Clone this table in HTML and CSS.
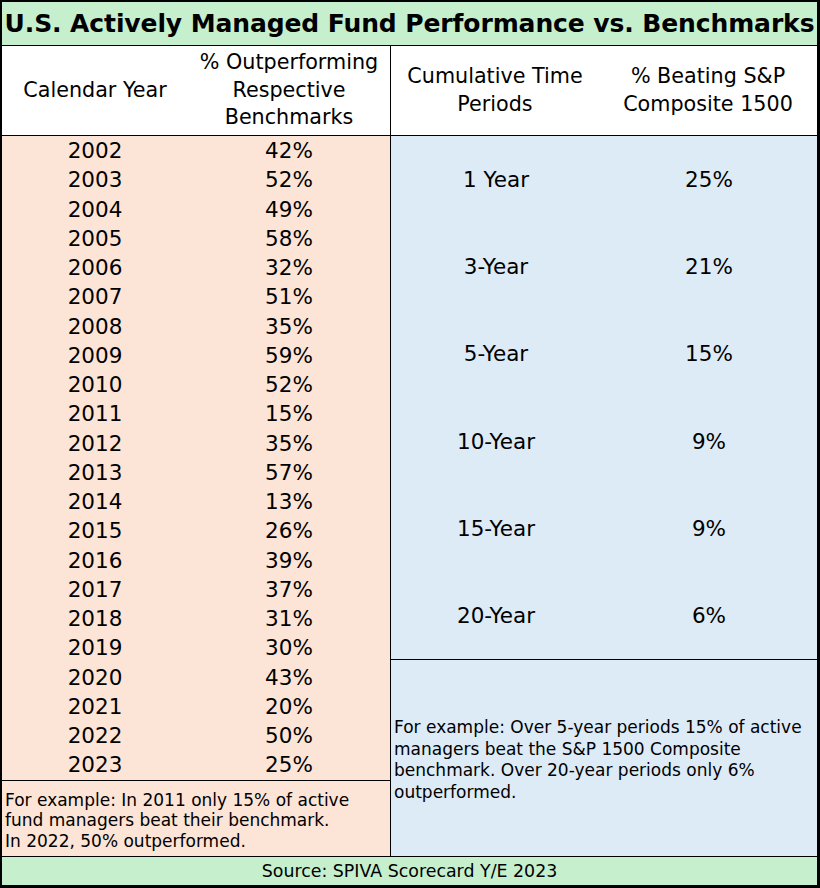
FILE: index.html
```html
<!DOCTYPE html>
<html lang="en">
<head>
<meta charset="utf-8">
<title>U.S. Actively Managed Fund Performance vs. Benchmarks</title>
<link rel="stylesheet" href="styles.css">
</head>
<body>
<div class="sheet">
  <div class="title">U.S. Actively Managed Fund Performance vs. Benchmarks</div>
  <div class="main">
    <div class="head head-left">
      <div class="hcell">Calendar Year</div>
      <div class="hcell">% Outperforming<br>Respective<br>Benchmarks</div>
    </div>
    <div class="head head-right">
      <div class="hcell">Cumulative Time<br>Periods</div>
      <div class="hcell">% Beating S&amp;P<br>Composite 1500</div>
    </div>
    <div class="left-body">
      <div class="years">
        <div class="yrow"><span>2002</span><span>42%</span></div>
        <div class="yrow"><span>2003</span><span>52%</span></div>
        <div class="yrow"><span>2004</span><span>49%</span></div>
        <div class="yrow"><span>2005</span><span>58%</span></div>
        <div class="yrow"><span>2006</span><span>32%</span></div>
        <div class="yrow"><span>2007</span><span>51%</span></div>
        <div class="yrow"><span>2008</span><span>35%</span></div>
        <div class="yrow"><span>2009</span><span>59%</span></div>
        <div class="yrow"><span>2010</span><span>52%</span></div>
        <div class="yrow"><span>2011</span><span>15%</span></div>
        <div class="yrow"><span>2012</span><span>35%</span></div>
        <div class="yrow"><span>2013</span><span>57%</span></div>
        <div class="yrow"><span>2014</span><span>13%</span></div>
        <div class="yrow"><span>2015</span><span>26%</span></div>
        <div class="yrow"><span>2016</span><span>39%</span></div>
        <div class="yrow"><span>2017</span><span>37%</span></div>
        <div class="yrow"><span>2018</span><span>31%</span></div>
        <div class="yrow"><span>2019</span><span>30%</span></div>
        <div class="yrow"><span>2020</span><span>43%</span></div>
        <div class="yrow"><span>2021</span><span>20%</span></div>
        <div class="yrow"><span>2022</span><span>50%</span></div>
        <div class="yrow"><span>2023</span><span>25%</span></div>
      </div>
      <div class="note note-left">For example: In 2011 only 15% of active<br>fund managers beat their benchmark.<br>In 2022, 50% outperformed.</div>
    </div>
    <div class="right-body">
      <div class="periods">
        <div class="prow"><span>1 Year</span><span>25%</span></div>
        <div class="prow"><span>3-Year</span><span>21%</span></div>
        <div class="prow"><span>5-Year</span><span>15%</span></div>
        <div class="prow"><span>10-Year</span><span>9%</span></div>
        <div class="prow"><span>15-Year</span><span>9%</span></div>
        <div class="prow"><span>20-Year</span><span>6%</span></div>
      </div>
      <div class="note note-right"><p>For example: Over 5-year periods 15% of active<br>managers beat the S&amp;P 1500 Composite<br>benchmark. Over 20-year periods only 6%<br>outperformed.</p></div>
    </div>
  </div>
  <div class="footer">Source: SPIVA Scorecard Y/E 2023</div>
</div>
</body>
</html>
```

FILE: styles.css
```css
html, body {
  margin: 0;
  padding: 0;
  background: #ffffff;
}

.sheet {
  width: 820px;
  height: 888px;
  box-sizing: border-box;
  border: 2px solid #000;
  border-right-width: 3px;
  border-bottom-width: 3px;
  display: flex;
  flex-direction: column;
  font-family: "DejaVu Sans", Verdana, sans-serif;
  color: #000;
}

.title {
  height: 43px;
  flex: none;
  background: #c6efce;
  border-bottom: 1px solid #000;
  font-weight: bold;
  font-size: 25px;
  line-height: 43px;
  text-align: center;
  white-space: nowrap;
  letter-spacing: -0.1px;
}

.main {
  flex: 1;
  display: grid;
  grid-template-columns: 389px 1fr;
  grid-template-rows: 90px 1fr;
}

.head {
  background: #fff;
  border-bottom: 1px solid #000;
  display: grid;
  align-items: center;
  font-size: 20.7px;
  line-height: 27.5px;
  text-align: center;
}

.head-left {
  border-right: 1px solid #000;
  grid-template-columns: 186px 1fr;
}

.head-right {
  grid-template-columns: 208px 1fr;
}

.left-body {
  background: #fce4d6;
  border-right: 1px solid #000;
  display: flex;
  flex-direction: column;
}

.years {
  display: flex;
  flex-direction: column;
}

.yrow {
  height: 29.25px;
  display: grid;
  grid-template-columns: 186px 1fr;
  align-items: center;
  text-align: center;
  font-size: 21.5px;
}

.note {
  font-size: 17px;
}

.note-left {
  flex: 1;
  border-top: 1px solid #000;
  padding: 9px 0 0 3px;
  line-height: 20.5px;
}

.right-body {
  background: #ddebf7;
  display: flex;
  flex-direction: column;
}

.periods {
  display: flex;
  flex-direction: column;
}

.prow {
  height: 87.2px;
  display: grid;
  grid-template-columns: 210px 1fr;
  align-items: center;
  text-align: center;
  font-size: 21.5px;
}

.note-right {
  flex: 1;
  border-top: 1px solid #000;
  display: flex;
  align-items: center;
  padding: 4px 0 0 3px;
  line-height: 21.5px;
}

.note-right p {
  margin: 0;
}

.footer {
  height: 28px;
  flex: none;
  background: #c6efce;
  border-top: 1px solid #000;
  font-size: 17.4px;
  line-height: 28px;
  text-align: center;
}
```
